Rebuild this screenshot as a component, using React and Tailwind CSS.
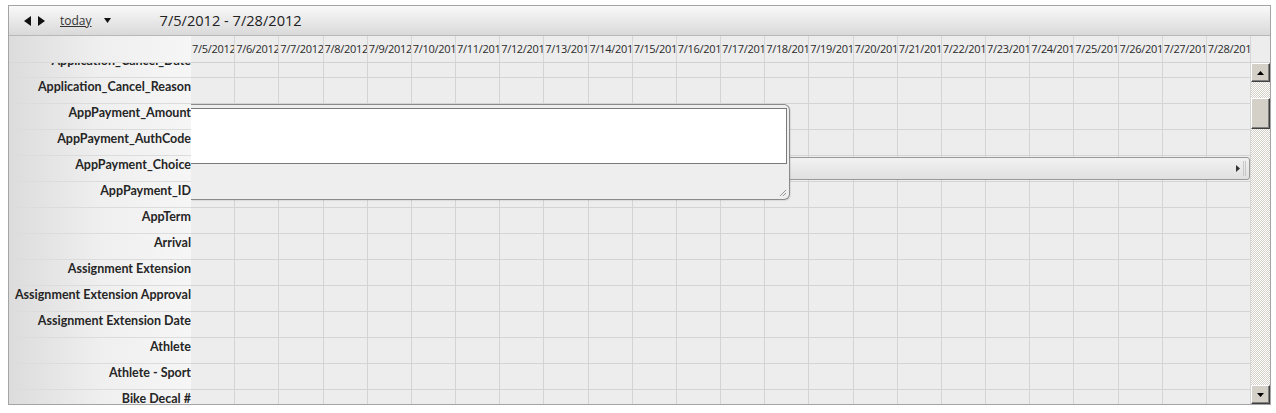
import React from "react";

const labels = [
    "Application_Cancel_Date",
    "Application_Cancel_Reason",
    "AppPayment_Amount",
    "AppPayment_AuthCode",
    "AppPayment_Choice",
    "AppPayment_ID",
    "AppTerm",
    "Arrival",
    "Assignment Extension",
    "Assignment Extension Approval",
    "Assignment Extension Date",
    "Athlete",
    "Athlete - Sport",
    "Bike Decal #",
];

const days = Array.from({ length: 24 }, (_, i) => `7/${i + 5}/2012`);

// classic 3D scrollbar button face
const btn =
    "bg-[#d4d0c8] border border-t-white border-l-white border-r-[#404040] border-b-[#404040] shadow-[inset_-1px_-1px_0_#808080] flex items-center justify-center";

const App = () => {
    return (
        <div className="h-[413px] bg-white pt-[5px] pl-[8px] font-['Open_Sans',sans-serif] text-[#333]">
            <div className="w-[1263px] h-[400px] border border-[#a4a4a4] flex flex-col overflow-hidden">
                {/* Toolbar */}
                <div className="h-[30px] shrink-0 flex items-center border-b border-[#b8b8b8] bg-gradient-to-b from-[#f9f9f9] to-[#d9d9d9]">
                    <div className="flex items-center gap-[7px] ml-[15px]">
                        <svg width="7" height="10" viewBox="0 0 7 10">
                            <path d="M7 0 L0 5 L7 10 Z" fill="#111" />
                        </svg>
                        <svg width="7" height="10" viewBox="0 0 7 10">
                            <path d="M0 0 L7 5 L0 10 Z" fill="#111" />
                        </svg>
                    </div>
                    <span className="ml-[15px] text-[12px] underline text-[#333] leading-none">today</span>
                    <svg className="ml-[12px]" width="7" height="5" viewBox="0 0 7 5">
                        <path d="M0 0 L7 0 L3.5 5 Z" fill="#111" />
                    </svg>
                    <span className="ml-[49px] text-[14.6px] text-[#222] leading-none">7/5/2012 - 7/28/2012</span>
                </div>

                <div className="flex flex-1 min-h-0">
                    {/* Row labels */}
                    <div className="w-[182px] shrink-0 flex flex-col bg-gradient-to-r from-[#dcdcdc] via-[#efefef] to-[#f6f6f6]">
                        <div className="h-[27px] shrink-0 border-b border-[#d8d8d8]" />
                        <div className="flex-1 overflow-hidden">
                            <div className="-mt-[11px]">
                                {labels.map((l) => (
                                    <div
                                        key={l}
                                        className="h-[26px] border-b border-[#dcdcdc] text-right text-[12.5px] font-bold leading-[18px] font-['Lato',sans-serif] text-[#262626] whitespace-nowrap"
                                    >
                                        {l}
                                    </div>
                                ))}
                            </div>
                        </div>
                    </div>

                    {/* Timeline */}
                    <div className="flex-1 flex flex-col min-w-0 bg-[#ededed]">
                        {/* Date header */}
                        <div className="h-[27px] shrink-0 flex border-b border-[#d2d2d2]">
                            <div className="w-[1060px] grid grid-cols-[repeat(24,minmax(0,1fr))]">
                                {days.map((d) => (
                                    <div
                                        key={d}
                                        className="border-r border-[#d6d6d6] overflow-hidden whitespace-nowrap text-[11px] tracking-[-0.3px] leading-[26px] pl-[1px] text-[#2a2a2a]"
                                    >
                                        {d}
                                    </div>
                                ))}
                            </div>
                            <div className="flex-1" />
                        </div>

                        {/* Body */}
                        <div className="flex-1 flex min-h-0">
                            <div className="relative w-[1060px] overflow-hidden">
                                <div className="-mt-[11px]">
                                    {labels.map((l) => (
                                        <div
                                            key={l}
                                            className="h-[26px] grid grid-cols-[repeat(24,minmax(0,1fr))] border-b border-[#d4d4d4]"
                                        >
                                            {days.map((d) => (
                                                <div key={d} className="border-r border-[#d4d4d4]" />
                                            ))}
                                        </div>
                                    ))}
                                </div>

                                {/* Event bar */}
                                <div className="absolute left-0 top-[94px] w-[1059px] h-[23px] rounded-r-[3px] border border-[#9a9a9a] bg-gradient-to-b from-[#f2f2f2] to-[#e0e0e0] flex items-center justify-end pr-[3px] gap-[3px]">
                                    <svg width="4" height="7" viewBox="0 0 4 7">
                                        <path d="M0 0 L4 3.5 L0 7 Z" fill="#333" />
                                    </svg>
                                    <div className="w-[3px] h-[15px] border-l border-r border-[#c8c8c8]" />
                                </div>

                                {/* Editor popup */}
                                <div className="absolute left-0 top-[41px] w-[599px] h-[96px] bg-[#eeeeee] border border-l-0 border-[#8a8a8a] rounded-r-[6px] shadow-[1px_1px_1px_rgba(0,0,0,0.08)]">
                                    <div className="mt-[3px] w-[596px] h-[56px] bg-white border border-l-0 border-[#7a7a7a]" />
                                    <svg className="absolute right-[2px] bottom-[2px]" width="8" height="8" viewBox="0 0 8 8">
                                        <path d="M1 7 L7 1 M4 7 L7 4" stroke="#999" strokeWidth="1" />
                                    </svg>
                                </div>
                            </div>

                            {/* Vertical scrollbar */}
                            <div className="flex-1 flex flex-col bg-[image:repeating-conic-gradient(#d4d0c8_0%_25%,#ffffff_0%_50%)] bg-[length:2px_2px]">
                                <div className={`h-[19px] shrink-0 ${btn}`}>
                                    <svg width="7" height="4" viewBox="0 0 7 4">
                                        <path d="M0 4 L3.5 0 L7 4 Z" fill="#000" />
                                    </svg>
                                </div>
                                <div className="flex-1">
                                    <div className={`mt-[16px] h-[31px] ${btn}`} />
                                </div>
                                <div className={`h-[19px] shrink-0 ${btn}`}>
                                    <svg width="7" height="4" viewBox="0 0 7 4">
                                        <path d="M0 0 L7 0 L3.5 4 Z" fill="#000" />
                                    </svg>
                                </div>
                            </div>
                        </div>
                    </div>
                </div>
            </div>
        </div>
    );
};

export default App;
